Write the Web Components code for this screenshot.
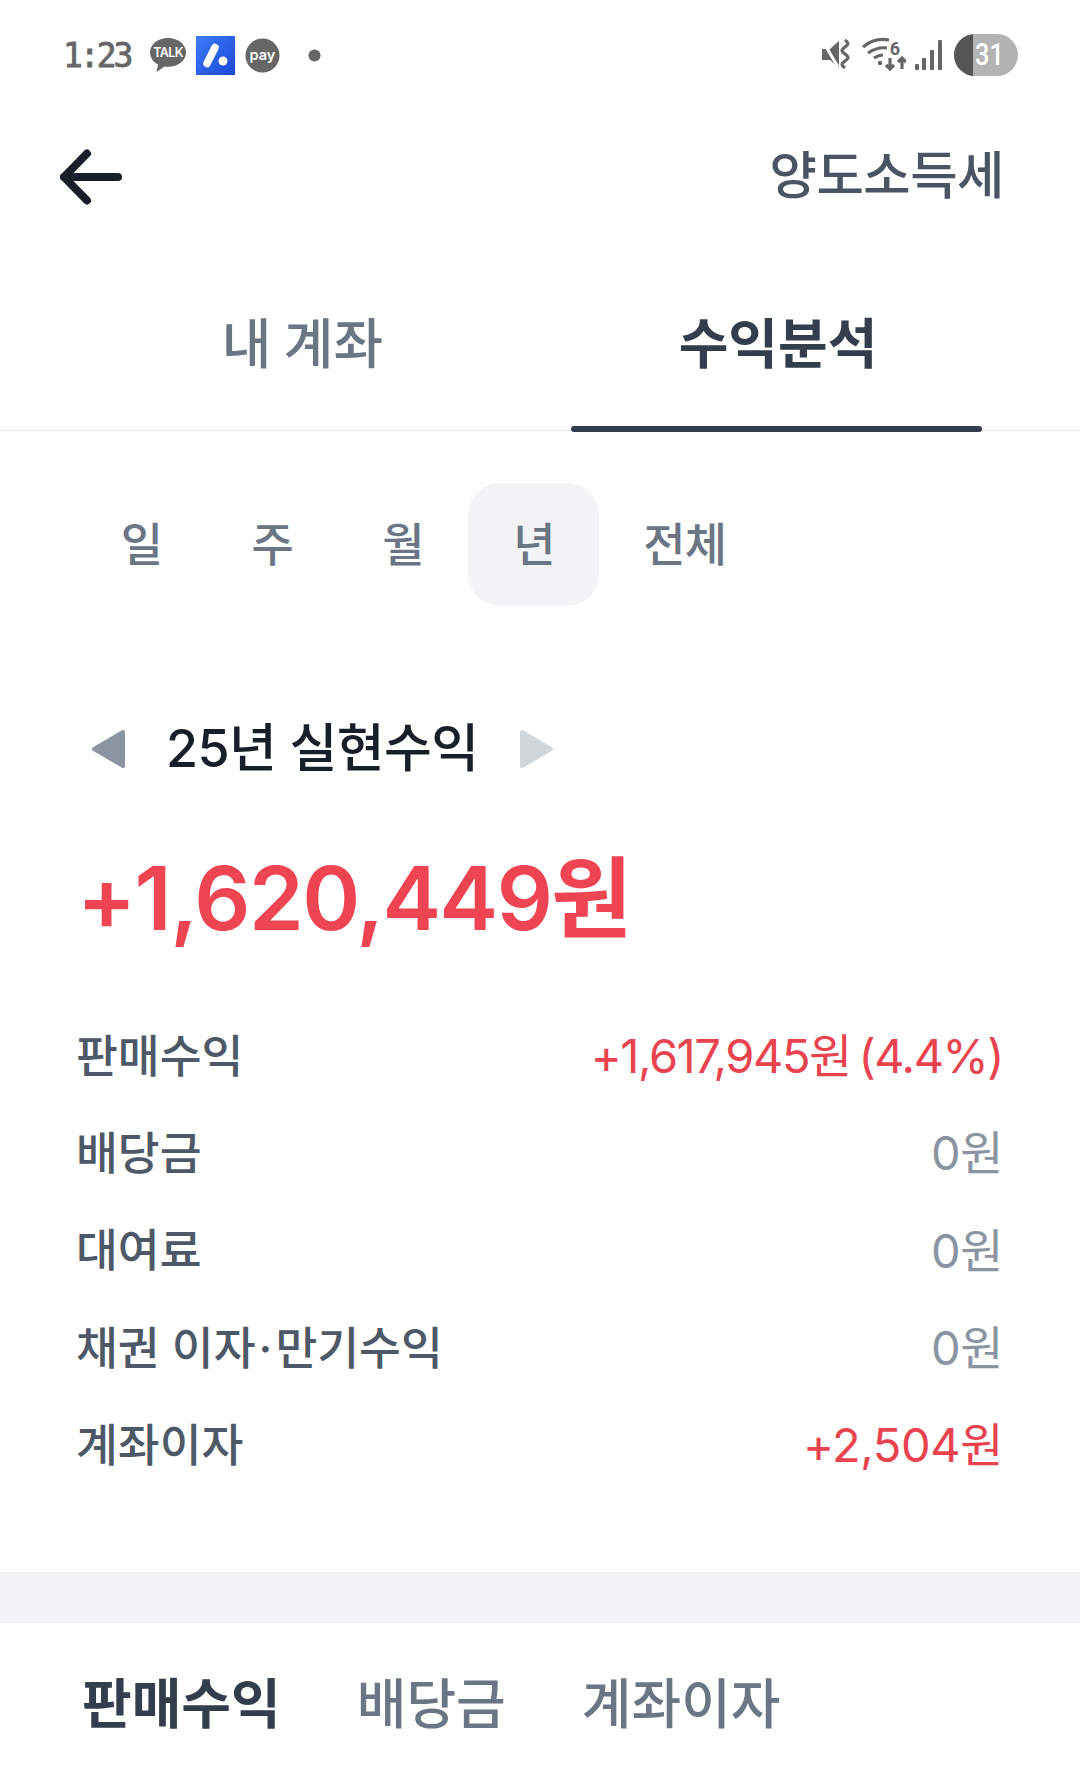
<!DOCTYPE html>
<html lang="ko"><head><meta charset="utf-8">
<style>
html,body{margin:0;padding:0;background:#fff}
body{width:1080px;height:1767px;overflow:hidden;font-family:"Inter","Noto Sans CJK KR",sans-serif;}
</style></head><body>
<app-screen></app-screen>
<script>
const FONT='"Inter","Noto Sans CJK KR",sans-serif';
function def(name,css,html){
  customElements.define(name,class extends HTMLElement{
    constructor(){super();this.attachShadow({mode:'open'}).innerHTML=`<style>${css}</style>${html}`;}
  });
}
def('status-bar',`:host{display:flex;align-items:center;height:108px;padding:2px 62px 0 63px;box-sizing:border-box;justify-content:space-between}
.l,.r{display:flex;align-items:center}
.t{font-family:"DejaVu Sans Mono",monospace;font-size:33px;line-height:1;letter-spacing:-3px;color:#666;-webkit-text-stroke:.8px #666;width:72px;margin-right:13px}
svg{display:block}
.b{position:relative;width:64px;height:42px;border-radius:21px;background:#b3b3b3;overflow:hidden;color:#fff;font:500 31px/42px "Roboto",sans-serif;padding-left:21px;box-sizing:border-box}
.b i{position:absolute;left:0;top:0;bottom:0;width:19px;background:#555}
.b span{position:relative;display:inline-block;transform:scaleX(.82);transform-origin:left center}
`,`<div class="l"><span class="t">1:23</span>
<svg width="40" height="40" viewBox="0 0 40 40"><path d="M20 3C9.500 3 2 9.700 2 17.500c0 5 3.200 9.400 8 12l-1.500 7.500 8-5.500c1.100.2 2.300.3 3.500.3 10.500 0 18-6.600 18-14.300S30.500 3 20 3z" fill="#666"/><text x="20" y="22" font-family="Inter,sans-serif" font-size="12.500" font-weight="600" fill="#fff" text-anchor="middle" letter-spacing="-.6">TALK</text></svg>
<svg style="margin-left:8px" width="39" height="39" viewBox="0 0 39 39"><defs><linearGradient id="g" x1="0" y1="0" x2="1" y2="1"><stop offset="0" stop-color="#3d7dfa"/><stop offset="1" stop-color="#1a47d8"/></linearGradient></defs><rect width="39" height="39" fill="url(#g)"/><path d="M11 27.500 19 11.500" stroke="#fff" stroke-width="7.500" stroke-linecap="round"/><circle cx="27" cy="25" r="4.500" fill="#fff"/></svg>
<svg style="margin-left:10px" width="35" height="35" viewBox="0 0 35 35"><circle cx="17.500" cy="17.500" r="17" fill="#666"/><text x="17.500" y="21.500" font-family="Inter,sans-serif" font-size="14.500" font-weight="600" fill="#fff" text-anchor="middle">pay</text></svg>
<svg style="margin-left:28px" width="13" height="13"><circle cx="6.500" cy="6.500" r="6" fill="#666"/></svg></div>
<div class="r">
<svg width="32" height="32" viewBox="0 0 32 32"><path d="M4 10h8l9-8v27l-9-8H4z" fill="#666"/><path d="M4 1l16 27" stroke="#fff" stroke-width="3"/><path d="M27 1c4 3 4 4 0 7s-4 4 0 7 4 4 0 7-4 4 0 7" fill="none" stroke="#666" stroke-width="3.200"/></svg>
<svg style="margin-left:12px" width="44" height="36" viewBox="0 0 44 36"><g fill="none" stroke="#666" stroke-width="3.200"><path d="M1 10C8 4 17 1 27 3"/><path d="M6 16c6-4 12-6 19-5"/><path d="M12 21c3-2 6-3 9-3"/><path d="M28 21v11M24 28l4 4 4-4M40 32V21M36 25l4-4 4 4"/></g><circle cx="18" cy="26" r="2.200" fill="#666"/><text x="33" y="18" font-family="Roboto,sans-serif" font-size="18" font-weight="700" fill="#666" text-anchor="middle">6</text></svg>
<svg style="margin-left:8px" width="28" height="30" viewBox="0 0 28 30"><g fill="#666"><rect x="1" y="24" width="4" height="6" rx="1"/><rect x="8" y="18" width="4" height="12" rx="1"/><rect x="16" y="10" width="4" height="20" rx="1"/><rect x="24" y="0" width="4" height="30" rx="1"/></g></svg>
<div class="b" style="margin-left:12px"><i></i><span>31</span></div></div>`);
def('top-bar',`:host{display:flex;align-items:center;justify-content:space-between;height:130px;padding:8px 76px 0 60px;box-sizing:border-box}
svg{display:block}
span{font:500 51.500px/1 ${FONT};color:#4a5462;letter-spacing:-.5px;position:relative;top:-1px}`,
`<svg width="62" height="56" viewBox="0 0 62 56"><path d="M4 28H58M27 4.500 4 28l23 23.500" fill="none" stroke="#191f28" stroke-width="8" stroke-linecap="round" stroke-linejoin="round"/></svg><span><slot></slot></span>`);
def('main-tabs',`:host{display:flex;height:193px;box-sizing:border-box;padding:0 98px 0 97px;gap:63px;border-bottom:1px solid #e5e8eb}`,`<slot></slot>`);
def('main-tab',`:host{display:flex;justify-content:center;align-items:center;box-sizing:border-box;font:500 54px/1 ${FONT};color:#6b7684;height:192px;padding-top:21px;width:411px;flex:none;word-spacing:-2px}
:host([active]){color:#333d4b;font-weight:700;position:relative;padding-left:3px}
:host([active])::after{content:"";position:absolute;left:0;right:0;bottom:-2px;height:6px;border-radius:3px;background:#333d4b}`,`<slot></slot>`);
def('period-tabs',`:host{display:flex;padding:52px 0 0 76px;height:224px;box-sizing:content-box}`,`<slot></slot>`);
def('period-tab',`:host{display:flex;align-items:center;justify-content:center;min-width:130.800px;height:123px;box-sizing:border-box;border-radius:32px;padding:0 0 2px 1px;font:500 46px/1 ${FONT};color:#6b7684}
:host([active]){background:#f2f4f6}
:host([wide]){min-width:auto;padding:0 21px 2px;margin-left:23px;letter-spacing:-.8px}`,`<slot></slot>`);
def('year-head',`:host{display:flex;align-items:center;height:84px;padding-left:90px}
span{font:500 52px/1 ${FONT};color:#191f28;letter-spacing:-.6px;margin:0 41px 0 40px}
svg{display:block}`,
`<svg width="36" height="40" viewBox="0 0 36 40"><path d="M33 3V37L4 20z" fill="#8b95a1" stroke="#8b95a1" stroke-width="4" stroke-linejoin="round"/></svg><span><slot></slot></span><svg width="36" height="40" viewBox="0 0 36 40"><path d="M3 3V37L32 20z" fill="#d1d6db" stroke="#d1d6db" stroke-width="4" stroke-linejoin="round"/></svg>`);
def('total-amount',`:host{display:block;padding:57px 0 0 77px;font:600 88px/1.15 ${FONT};color:#ef4452;letter-spacing:-1.600px;height:130px}`,`<slot></slot>`);
def('detail-row',`:host{display:flex;justify-content:space-between;align-items:center;height:97.300px;padding:0 77px 0 76px;font:500 45.500px/1 ${FONT};color:#4e5968}
.v{color:#8b95a1;font-size:47px;font-weight:400;letter-spacing:-.4px;word-spacing:-4px;position:relative;top:-1px}
:host([plus]) .v{color:#e8434f}
:host([tight]) .v{letter-spacing:-1.450px}`,`<span><slot></slot></span><span class="v"><slot name="v"></slot></span>`);
def('detail-list',`:host{display:block;padding-top:30px;height:594px;box-sizing:border-box}`,`<slot></slot>`);
def('sep-band',`:host{display:block;height:51px;background:#f2f4f6}`,``);
def('sub-tabs',`:host{display:flex;height:144px;padding:20px 0 0 82px;box-sizing:border-box;gap:76px;align-items:center;font:500 54px/1 ${FONT};color:#6b7684}`,`<slot></slot>`);
def('sub-tab',`:host{display:block}:host([active]){color:#333d4b;font-weight:700}`,`<slot></slot>`);
def('app-screen',`:host{display:block;width:1080px;height:1767px;overflow:hidden}`,`
<status-bar></status-bar>
<top-bar>양도소득세</top-bar>
<main-tabs><main-tab>내 계좌</main-tab><main-tab active>수익분석</main-tab></main-tabs>
<period-tabs><period-tab>일</period-tab><period-tab>주</period-tab><period-tab>월</period-tab><period-tab active>년</period-tab><period-tab wide>전체</period-tab></period-tabs>
<year-head>25년 실현수익</year-head>
<total-amount>+1,620,449원</total-amount>
<detail-list>
<detail-row plus tight>판매수익<span slot="v">+1,617,945원 (4.4%)</span></detail-row>
<detail-row>배당금<span slot="v">0원</span></detail-row>
<detail-row>대여료<span slot="v">0원</span></detail-row>
<detail-row>채권 이자<span style="margin:0 3px">·</span>만기수익<span slot="v">0원</span></detail-row>
<detail-row plus>계좌이자<span slot="v">+2,504원</span></detail-row>
</detail-list>
<sep-band></sep-band>
<sub-tabs><sub-tab active>판매수익</sub-tab><sub-tab>배당금</sub-tab><sub-tab>계좌이자</sub-tab></sub-tabs>`);
</script>
</body></html>
